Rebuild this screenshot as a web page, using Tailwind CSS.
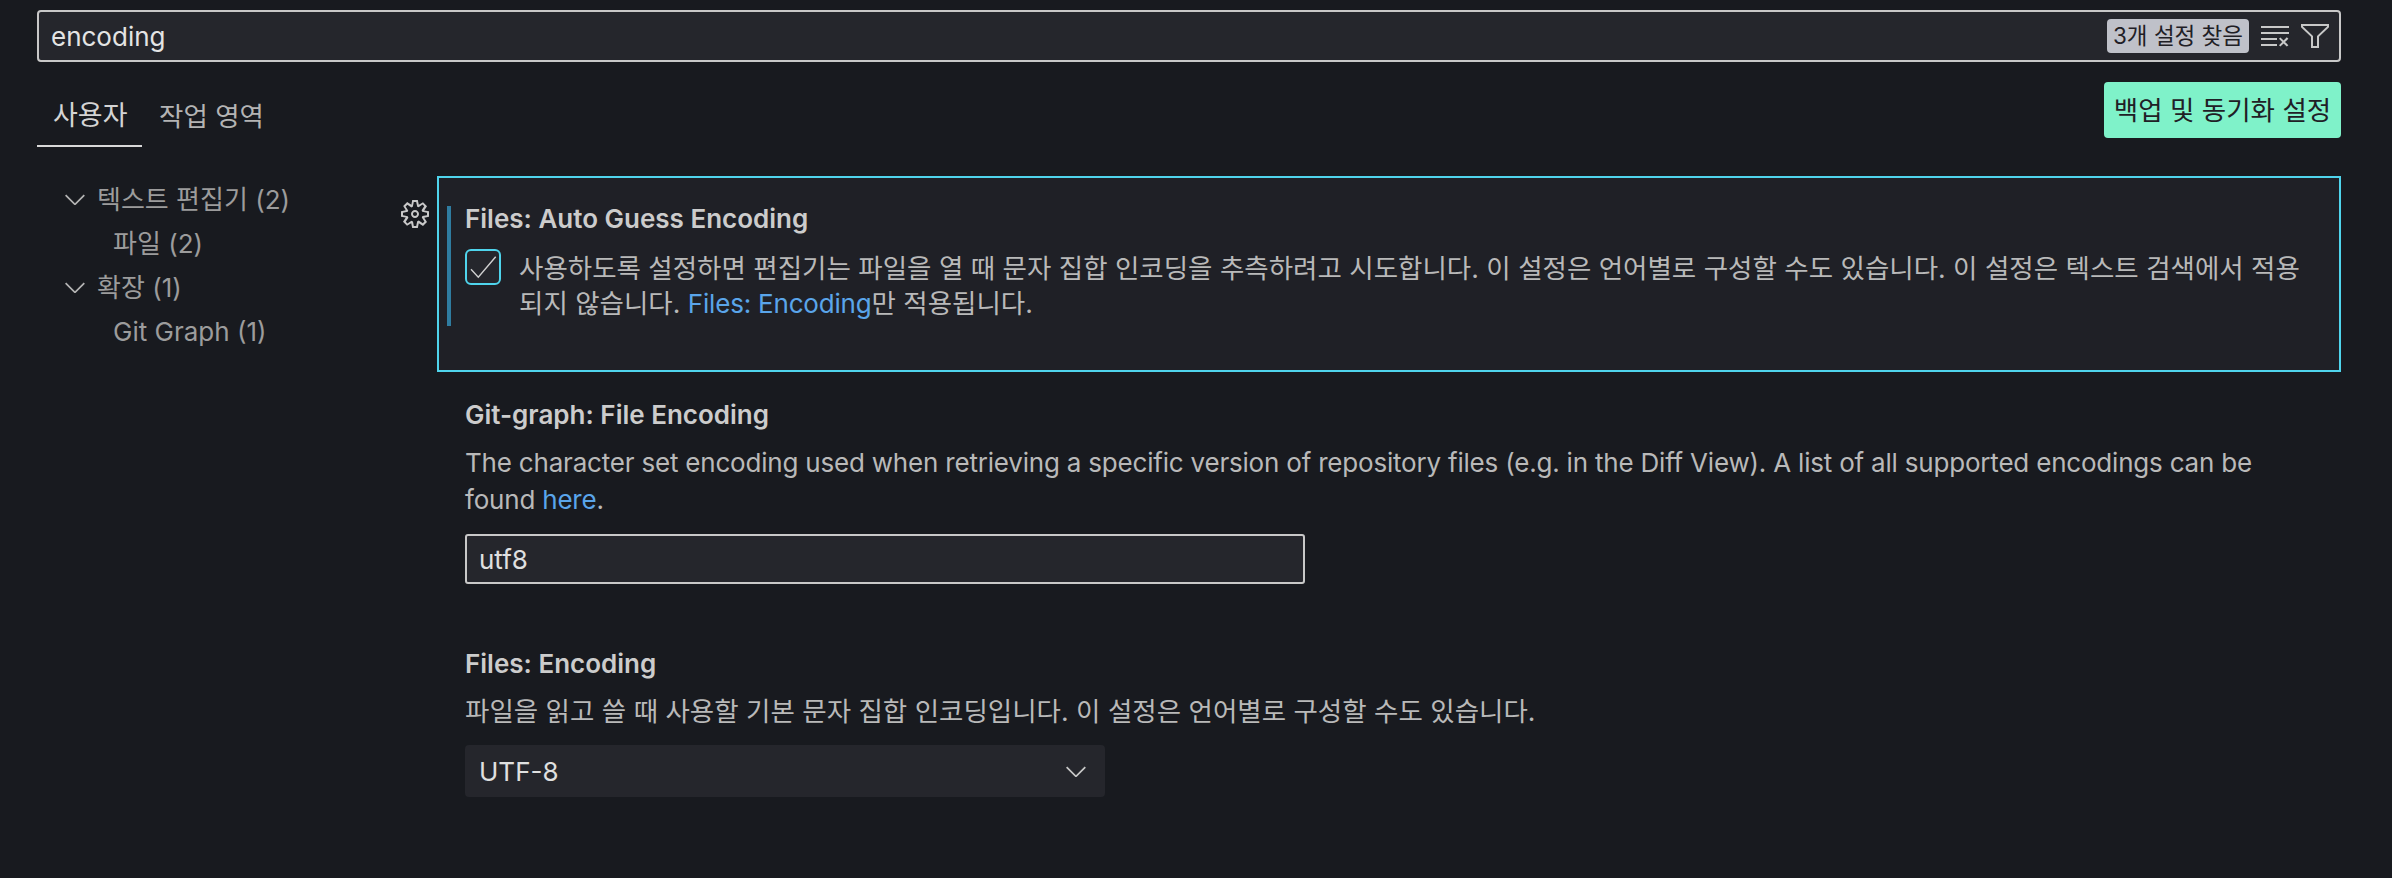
<!DOCTYPE html>
<html lang="ko">
<head>
    <meta charset="UTF-8">
    <meta name="viewport" content="width=device-width, initial-scale=1.0">
    <title>Settings</title>
    <script src="https://cdn.jsdelivr.net/npm/@tailwindcss/browser@4"></script>
</head>
<body class="bg-[#181a1f] font-['Inter','Noto_Sans_CJK_KR',sans-serif] text-[26px] text-[#b9b9b9] overflow-hidden">
    <div class="h-[878px] pl-[37px] pr-[51px] pt-[10px]">
        <!-- Search -->
        <div class="flex items-center h-[52px] border-2 border-[#c8c8c8] rounded-[4px] bg-[#25262c] pl-[12px]">
            <span class="flex-1 text-[#e4e4e4]">encoding</span>
            <span class="flex items-center justify-center w-[142px] h-[34px] rounded-[4px] bg-[#bfc1c9] text-[#1f2026] text-[22.5px]">3개 설정 찾음</span>
            <svg class="ml-[10px] w-[32px] h-[32px]" viewBox="0 0 16 16" fill="#c8c8c8"><path d="M10 12.6l.7.7 1.6-1.6 1.6 1.6.8-.7L13 11l1.7-1.6-.8-.8-1.6 1.7-1.6-1.6-.7.7 1.6 1.6-1.6 1.6zM1 4h14V3H1v1zm0 3h14V6H1v1zm8 2.5V9H1v1h8v-.5zM9 13v-1H1v1h8z"/></svg>
            <svg class="ml-[8px] mr-[8px] w-[32px] h-[32px]" viewBox="0 0 16 16" fill="#c8c8c8"><path d="M15 2v1.67l-5 4.759V14H6V8.429l-5-4.76V2h14zM7 8v5h2V8l5-4.76V3H2v.24L7 8z"/></svg>
        </div>

        <!-- Tabs -->
        <div class="flex justify-between mt-[20px] h-[65px]">
            <div class="flex">
                <div class="w-[105px] h-[65px] border-b-2 border-[#d8d8d8] pt-[19px] pl-[16px] text-[27px] text-[#d4d4d4] leading-[30px]">사용자</div>
                <div class="ml-[17px] pt-[19px] leading-[30px] text-[26.5px] text-[#b4b4b4]">작업 영역</div>
            </div>
            <div class="flex items-center justify-center w-[237px] h-[56px] pt-[2px] rounded-[4px] bg-[#7ff2c9] text-[#1f2026] text-[26.5px]">백업 및 동기화 설정</div>
        </div>

        <div class="flex mt-[29px]">
            <!-- Tree -->
            <div class="w-[362px] pt-[1px] text-[#9c9c9c]">
                <div class="flex items-center h-[44px] pl-[22px]">
                    <svg class="w-[32px] h-[32px] mr-[6px]" viewBox="0 0 16 16" fill="#b4b4b4"><path d="M7.976 10.072l4.357-4.357.62.618L8.284 11h-.618L3 6.333l.619-.618 4.357 4.357z"/></svg>
                    <span>텍스트 편집기 (2)</span>
                </div>
                <div class="flex items-center h-[44px] pl-[76px]">파일 (2)</div>
                <div class="flex items-center h-[44px] pl-[22px]">
                    <svg class="w-[32px] h-[32px] mr-[6px]" viewBox="0 0 16 16" fill="#b4b4b4"><path d="M7.976 10.072l4.357-4.357.62.618L8.284 11h-.618L3 6.333l.619-.618 4.357 4.357z"/></svg>
                    <span>확장 (1)</span>
                </div>
                <div class="flex items-center h-[44px] pl-[76px]">Git Graph (1)</div>
            </div>

            <!-- Gear gutter -->
            <div class="w-[38px] pt-[22px]">
                <svg class="w-[32px] h-[32px]" viewBox="0 0 16 16" fill="#c8c8c8" fill-rule="evenodd"><path d="M9.1 4.4L8.6 2H7.4l-.5 2.4-.7.3-2-1.3-.9.8 1.3 2-.2.7-2.4.5v1.2l2.4.5.3.8-1.3 2 .8.8 2-1.3.8.3.4 2.3h1.2l.5-2.4.8-.3 2 1.3.8-.8-1.3-2 .3-.8 2.3-.4V7.4l-2.4-.5-.3-.8 1.3-2-.8-.8-2 1.3-.7-.2zM9.4 1l.5 2.4L12 2.1l2 2-1.4 2.1 2.4.4v2.8l-2.4.5L14 12l-2 2-2.1-1.4-.5 2.4H6.6l-.5-2.4L4 13.9l-2-2 1.4-2.1L1 9.4V6.6l2.4-.5L2.1 4l2-2 2.1 1.4.4-2.4h2.8zm.6 7c0 1.1-.9 2-2 2s-2-.9-2-2 .9-2 2-2 2 .9 2 2zM8 9c.6 0 1-.4 1-1s-.4-1-1-1-1 .4-1 1 .4 1 1 1z"/></svg>
            </div>

            <!-- Settings list -->
            <div class="flex-1">
                <div class="h-[196px] border-2 border-[#4fd4ec] bg-[#1f2026] pl-[8px] pt-[28px]">
                    <div class="h-[120px] border-l-4 border-[#2f7ca0] pl-[14px]">
                        <div class="h-[26px] leading-[26px] font-semibold text-[#cccccc]">Files: Auto Guess Encoding</div>
                        <div class="flex mt-[17px]">
                            <div class="flex items-center justify-center shrink-0 w-[36px] h-[36px] border-2 border-[#4fd4ec] rounded-[6px] bg-[#25262c]">
                                <svg class="w-[32px] h-[32px]" viewBox="0 0 16 16" fill="none" stroke="#d0d0d0" stroke-width="0.7"><path d="M2 9.15L5.65 13.15L14.35 2.85"/></svg>
                            </div>
                            <p class="ml-[18px] mt-[2px] leading-[35px] text-[26.5px] whitespace-nowrap">사용하도록 설정하면 편집기는 파일을 열 때 문자 집합 인코딩을 추측하려고 시도합니다. 이 설정은 언어별로 구성할 수도 있습니다. 이 설정은 텍스트 검색에서 적용<br>되지 않습니다. <span class="text-[#5aa5ea] text-[26px] tracking-[-0.2px]">Files: Encoding</span>만 적용됩니다.</p>
                        </div>
                    </div>
                </div>

                <div class="ml-[28px]">
                    <div class="mt-[30px] h-[26px] leading-[26px] font-semibold text-[#cccccc]">Git-graph: File Encoding</div>
                    <p class="mt-[16px] leading-[37px] tracking-[-0.2px] whitespace-nowrap">The character set encoding used when retrieving a specific version of repository files (e.g. in the Diff View). A list of all supported encodings can be<br>found <span class="text-[#5aa5ea]">here</span>.</p>
                    <div class="flex items-center mt-[16px] w-[840px] h-[50px] border-2 border-[#c8c8c8] rounded-[3px] bg-[#25262c] pl-[12px] text-[#e0e0e0]">utf8</div>

                    <div class="mt-[67px] h-[26px] leading-[26px] font-semibold text-[#cccccc]">Files: Encoding</div>
                    <p class="mt-[16px] leading-[37px] text-[26.5px]">파일을 읽고 쓸 때 사용할 기본 문자 집합 인코딩입니다. 이 설정은 언어별로 구성할 수도 있습니다.</p>
                    <div class="flex items-center justify-between mt-[15px] w-[640px] h-[52px] rounded-[4px] bg-[#25262c] pl-[14px] pr-[13px] text-[#e0e0e0]">
                        <span class="pt-[1px]">UTF-8</span>
                        <svg class="w-[32px] h-[32px]" viewBox="0 0 16 16" fill="#c8c8c8"><path d="M7.976 10.072l4.357-4.357.62.618L8.284 11h-.618L3 6.333l.619-.618 4.357 4.357z"/></svg>
                    </div>
                </div>
            </div>
        </div>
    </div>
</body>
</html>
